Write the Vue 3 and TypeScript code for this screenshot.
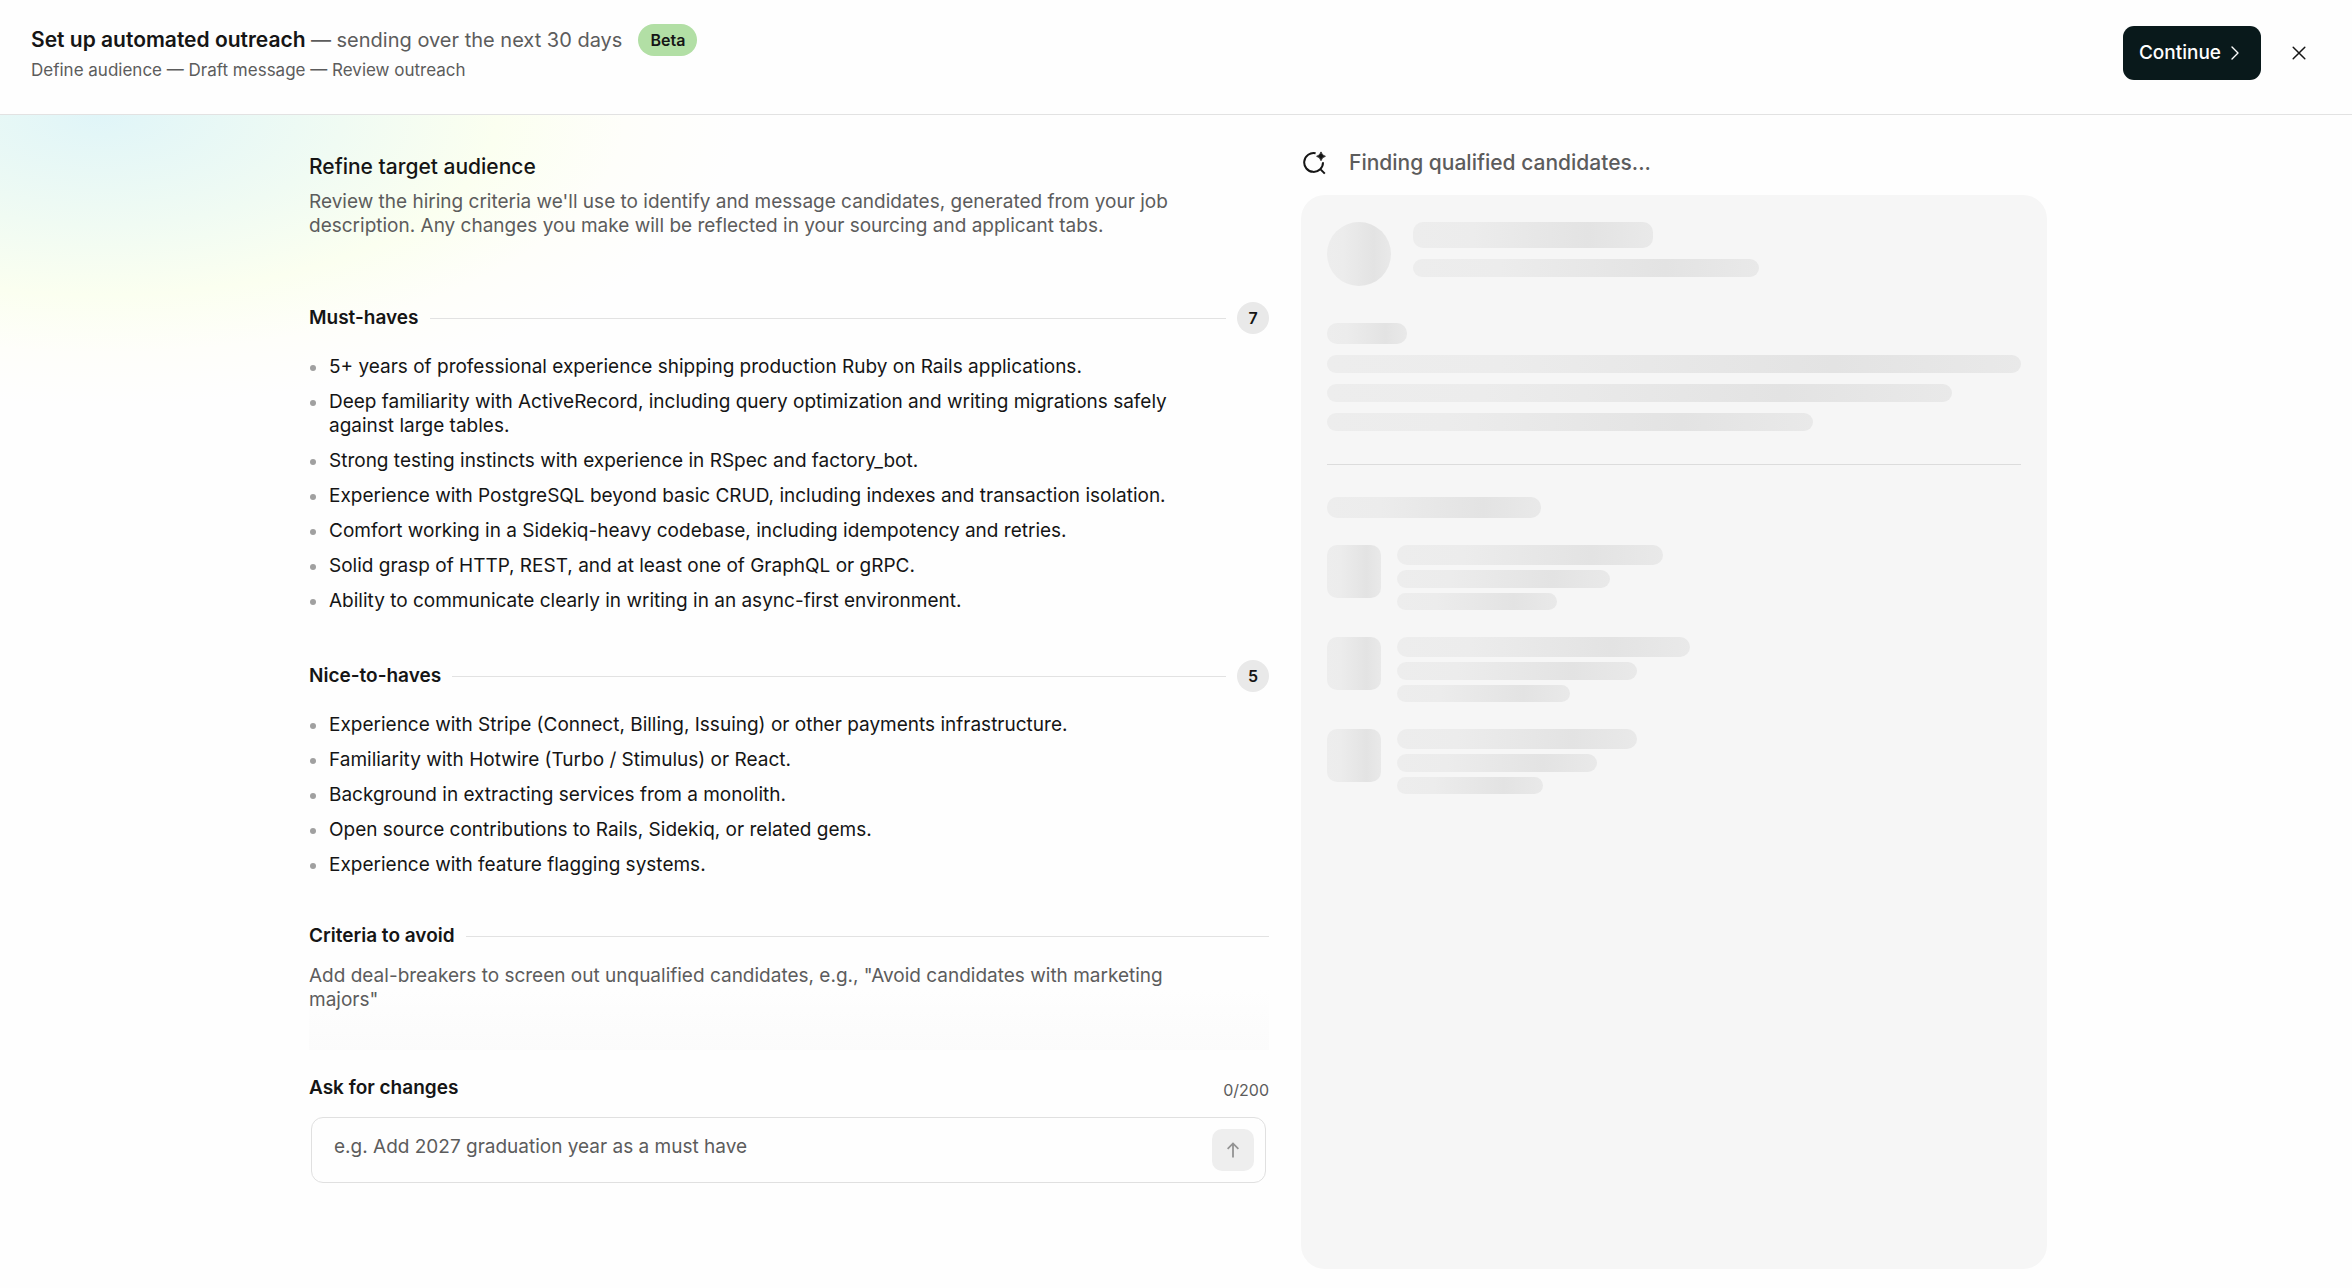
<script setup lang="ts">
import { ref } from 'vue'

interface CriteriaGroup {
  title: string
  items: string[]
}

const groups: CriteriaGroup[] = [
  {
    title: 'Must-haves',
    items: [
      '5+ years of professional experience shipping production Ruby on Rails applications.',
      'Deep familiarity with ActiveRecord, including query optimization and writing migrations safely against large tables.',
      'Strong testing instincts with experience in RSpec and factory_bot.',
      'Experience with PostgreSQL beyond basic CRUD, including indexes and transaction isolation.',
      'Comfort working in a Sidekiq-heavy codebase, including idempotency and retries.',
      'Solid grasp of HTTP, REST, and at least one of GraphQL or gRPC.',
      'Ability to communicate clearly in writing in an async-first environment.',
    ],
  },
  {
    title: 'Nice-to-haves',
    items: [
      'Experience with Stripe (Connect, Billing, Issuing) or other payments infrastructure.',
      'Familiarity with Hotwire (Turbo / Stimulus) or React.',
      'Background in extracting services from a monolith.',
      'Open source contributions to Rails, Sidekiq, or related gems.',
      'Experience with feature flagging systems.',
    ],
  },
]

// Widths of the placeholder bars in each loading row.
const skeletonRows: number[][] = [
  [266, 213, 160],
  [293, 240, 173],
  [240, 200, 146],
]

const maxLength = 200
const request = ref('')
</script>

<template>
  <div class="page">
    <header class="topbar">
      <div class="heading">
        <div class="title-row">
          <h1 class="title">
            Set up automated outreach <span class="title-note">— sending over the next 30 days</span>
          </h1>
          <span class="beta">Beta</span>
        </div>
        <p class="steps">Define audience — Draft message — Review outreach</p>
      </div>
      <div class="actions">
        <button class="continue" type="button">
          Continue
          <svg width="8" height="14" viewBox="0 0 8 14" aria-hidden="true">
            <path d="M1 1l6 6-6 6" fill="none" stroke="currentColor" stroke-width="1.4" stroke-linecap="round" stroke-linejoin="round" />
          </svg>
        </button>
        <button class="close" type="button" aria-label="Close">
          <svg width="14" height="14" viewBox="0 0 14 14" aria-hidden="true">
            <path d="M1.2 1.2l11.6 11.6M12.8 1.2L1.2 12.8" fill="none" stroke="currentColor" stroke-width="1.5" stroke-linecap="round" />
          </svg>
        </button>
      </div>
    </header>

    <main class="content">
      <section class="criteria">
        <h2 class="criteria-title">Refine target audience</h2>
        <p class="criteria-intro">
          Review the hiring criteria we'll use to identify and message candidates, generated from your job description. Any changes you make will be reflected in your sourcing and applicant tabs.
        </p>

        <section v-for="group in groups" :key="group.title" class="group">
          <div class="group-head">
            <h3 class="group-title">{{ group.title }}</h3>
            <span class="rule"></span>
            <span class="count">{{ group.items.length }}</span>
          </div>
          <ul class="items">
            <li v-for="item in group.items" :key="item" class="item">{{ item }}</li>
          </ul>
        </section>

        <section class="avoid">
          <div class="group-head">
            <h3 class="group-title">Criteria to avoid</h3>
            <span class="rule"></span>
          </div>
          <p class="avoid-hint">
            Add deal-breakers to screen out unqualified candidates, e.g., "Avoid candidates with marketing majors"
          </p>
        </section>

        <form class="ask" @submit.prevent>
          <div class="ask-head">
            <label class="ask-label" for="ask-input">Ask for changes</label>
            <span class="ask-count">{{ request.length }}/{{ maxLength }}</span>
          </div>
          <div class="ask-box">
            <input
              id="ask-input"
              v-model="request"
              class="ask-input"
              type="text"
              :maxlength="maxLength"
              placeholder="e.g. Add 2027 graduation year as a must have"
            />
            <button class="send" type="submit" aria-label="Send">
              <svg width="12" height="16" viewBox="0 0 12 16" aria-hidden="true">
                <path d="M6 15.500V1.400M0.600 6.800L6 1.400l5.400 5.400" fill="none" stroke="currentColor" stroke-width="1.800" />
              </svg>
            </button>
          </div>
        </form>
      </section>

      <section class="results">
        <div class="results-head">
          <svg class="search-icon" width="24" height="24" viewBox="0 0 24 24" aria-hidden="true">
            <path d="M12.600 2.300A9.400 9.400 0 1 0 20 11.200M16.800 17.600L21.800 22.600" fill="none" stroke="currentColor" stroke-width="2" />
            <path d="M18 0.900Q18.900 4.400 22.400 5.300Q18.900 6.200 18 9.700Q17.100 6.200 13.600 5.300Q17.100 4.400 18 0.900z" fill="currentColor" stroke="currentColor" stroke-width="0.800" stroke-linejoin="round" />
          </svg>
          <p class="results-title">Finding qualified candidates...</p>
        </div>
        <div class="panel" aria-busy="true">
          <div class="sk-profile">
            <span class="sk sk-avatar"></span>
            <div class="sk-names">
              <span class="sk sk-name"></span>
              <span class="sk sk-role"></span>
            </div>
          </div>
          <div class="sk-summary">
            <span class="sk sk-label"></span>
            <span class="sk sk-line"></span>
            <span class="sk sk-line sk-line-mid"></span>
            <span class="sk sk-line sk-line-short"></span>
          </div>
          <div class="sk-history">
            <span class="sk sk-heading"></span>
            <div v-for="(row, r) in skeletonRows" :key="r" class="sk-row">
              <span class="sk sk-logo"></span>
              <div class="sk-bars">
                <span v-for="(w, i) in row" :key="i" class="sk sk-bar" :style="{ width: w + 'px' }"></span>
              </div>
            </div>
          </div>
        </div>
      </section>
    </main>
  </div>
</template>

<style>
body {
  background: #fefefe;
}
</style>

<style scoped>
.page {
  display: flex;
  flex-direction: column;
  min-height: 100vh;
  color: #151515;
  font-family: Inter, "Liberation Sans", sans-serif;
  font-size: 19px;
  line-height: 24px;
}

h1,
h2,
h3,
p,
ul {
  margin: 0;
  padding: 0;
}

button {
  border: 0;
  padding: 0;
  font: inherit;
  cursor: pointer;
}

.topbar {
  display: flex;
  justify-content: space-between;
  box-sizing: border-box;
  height: 115px;
  padding: 24px 35px 0 31px;
  border-bottom: 1px solid #e2e2e2;
}

.title-row {
  display: flex;
  align-items: center;
  gap: 16px;
  height: 32px;
}

.title {
  font-size: 21px;
  line-height: 30px;
  font-weight: 600;
}

.title-note {
  color: #5c5c5c;
  font-size: 20px;
  font-weight: 400;
}

.beta {
  padding: 0 12px;
  border-radius: 16px;
  background: #b2dfa5;
  font-size: 16px;
  line-height: 32px;
  font-weight: 600;
}

.steps {
  margin-top: 2px;
  color: #5c5c5c;
  font-size: 17px;
}

.actions {
  display: flex;
  align-items: center;
  gap: 20px;
  height: 58px;
}

.continue {
  display: flex;
  align-items: center;
  gap: 10px;
  height: 54px;
  padding: 0 22px 0 16px;
  border-radius: 11px;
  background: #09191b;
  color: #fff;
  font-weight: 500;
}

.close {
  display: grid;
  place-items: center;
  width: 36px;
  height: 36px;
  background: none;
  color: #151515;
}

.content {
  display: grid;
  grid-template-columns: 960px 746px;
  flex: 1;
  justify-content: center;
  column-gap: 32px;
  padding: 34px 0 19px 4px;
  background:
    radial-gradient(ellipse 640px 290px at 100px 0, #e0f5f8 0, #f0fbf3 38%, #fbfff0 62%, #fefefa 82%, rgba(254, 254, 254, 0) 100%) no-repeat;
}

.criteria-title {
  margin-top: 3px;
  font-size: 21px;
  line-height: 30px;
  font-weight: 500;
}

.criteria-intro {
  width: 880px;
  margin-top: 8px;
  color: #5c5c5c;
}

.group {
  margin-top: 64px;
}

.group + .group {
  margin-top: 47px;
}

.group-head {
  display: flex;
  align-items: center;
  gap: 11px;
  height: 32px;
}

.group-title {
  font-size: 19px;
  font-weight: 600;
}

.rule {
  flex: 1;
  height: 1px;
  background: #e2e2e2;
}

.count {
  width: 32px;
  border-radius: 50%;
  background: #e9e9e9;
  font-size: 16px;
  line-height: 32px;
  font-weight: 600;
  text-align: center;
}

.items {
  display: flex;
  flex-direction: column;
  gap: 11px;
  width: 880px;
  margin-top: 21px;
  list-style: none;
}

.item {
  display: flex;
  gap: 13px;
}

.item::before {
  content: "";
  flex: none;
  width: 6px;
  height: 6px;
  margin: 10px 0 0 1px;
  border-radius: 50%;
  background: #a0a0a0;
}

.avoid {
  margin-top: 43px;
  padding-bottom: 38px;
  background: linear-gradient(to top, #fbfbfb, rgba(254, 254, 254, 0) 60px);
}

.avoid-hint {
  width: 880px;
  margin-top: 12px;
  color: #5c5c5c;
}

.ask {
  margin-top: 26px;
}

.ask-head {
  display: flex;
  justify-content: space-between;
  align-items: flex-end;
}

.ask-label {
  font-weight: 600;
}

.ask-count {
  color: #5c5c5c;
  font-size: 16px;
  line-height: 20px;
}

.ask-box {
  display: flex;
  align-items: center;
  height: 64px;
  margin: 17px 3px 0 2px;
  padding: 0 11px 0 22px;
  border: 1px solid #e0e0e0;
  border-radius: 12px;
}

.ask-input {
  flex: 1;
  height: 64px;
  padding: 0 0 8px;
  border: 0;
  outline: 0;
  background: none;
  color: inherit;
  font: inherit;
}

.ask-input::placeholder {
  color: #5c5c5c;
  opacity: 1;
}

.send {
  display: grid;
  place-items: center;
  width: 42px;
  height: 42px;
  border-radius: 10px;
  background: #eeeeee;
  color: #929292;
}

.results {
  display: flex;
  flex-direction: column;
}

.results-head {
  display: flex;
  align-items: center;
  gap: 22px;
  height: 28px;
  padding-left: 2px;
}

.results-title {
  color: #5c5c5c;
  font-size: 21px;
  line-height: 28px;
  font-weight: 500;
}

.panel {
  flex: 1;
  margin-top: 18px;
  padding: 27px 26px;
  border-radius: 24px;
  background: #f6f6f6;
}

.sk {
  display: block;
  border-radius: 10px;
  background: linear-gradient(90deg, #ededed 0, #ececec 25%, #e3e3e3 73%, #e9e9e9 100%);
}

.sk-profile {
  display: flex;
  gap: 22px;
}

.sk-avatar {
  width: 64px;
  height: 64px;
  border-radius: 50%;
}

.sk-names {
  display: flex;
  flex-direction: column;
  gap: 11px;
}

.sk-name {
  width: 240px;
  height: 26px;
}

.sk-role {
  width: 346px;
  height: 18px;
}

.sk-summary {
  display: flex;
  flex-direction: column;
  gap: 11px;
  margin-top: 37px;
  padding-bottom: 33px;
  border-bottom: 1px solid #dcdcdc;
}

.sk-label {
  width: 80px;
  height: 21px;
}

.sk-line {
  height: 18px;
}

.sk-line-mid {
  width: 90%;
}

.sk-line-short {
  width: 70%;
}

.sk-history {
  display: flex;
  flex-direction: column;
  gap: 27px;
  margin-top: 32px;
}

.sk-heading {
  width: 214px;
  height: 21px;
}

.sk-row {
  display: flex;
  gap: 16px;
}

.sk-logo {
  width: 54px;
  height: 53px;
}

.sk-bars {
  display: flex;
  flex-direction: column;
  gap: 5px;
}

.sk-bar {
  height: 18px;
}

.sk-bar:first-child {
  height: 20px;
}

.sk-bar:last-child {
  height: 17px;
}
</style>
